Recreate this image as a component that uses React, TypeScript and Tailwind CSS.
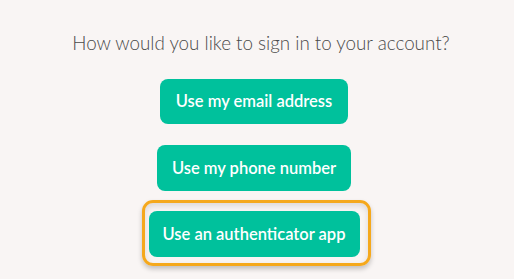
export default function App() {
  return (
    <div
      className="min-h-[279px] w-full bg-[#f9f5f4] flex flex-col items-center pt-[31px]"
      style={{ fontFamily: "Lato, 'Noto Sans', sans-serif" }}
    >
      {/* Prompt */}
      <p className="text-[18.8px] leading-[24px] font-light text-[#4a4a4a] pl-[8px]">
        How would you like to sign in to your account?
      </p>

      {/* Sign-in method buttons */}
      <div className="flex flex-col items-center mt-[24px] pr-[6px]">
        <button
          type="button"
          className="h-[45px] w-[188px] rounded-[8px] bg-[#00c19c] text-white font-semibold text-[16.5px]"
        >
          Use my email address
        </button>
        <button
          type="button"
          className="mt-[21px] h-[46px] w-[194px] rounded-[8px] bg-[#00c19c] text-white font-semibold text-[16.5px]"
        >
          Use my phone number
        </button>
        {/* Focused option — orange focus ring */}
        <div className="mt-[9px] ml-[4px] rounded-[11px] border-[3px] border-[#f5a81c] pt-[8px] pr-[8px] pb-[6px] pl-[4px] shadow-[0_3px_5px_rgba(0,0,0,0.22),inset_0_3px_6px_rgba(0,0,0,0.12)]">
          <button
            type="button"
            className="h-[46px] w-[211px] rounded-[8px] bg-[#00c19c] text-white font-semibold text-[16.5px] block"
          >
            Use an authenticator app
          </button>
        </div>
      </div>
    </div>
  );
}
